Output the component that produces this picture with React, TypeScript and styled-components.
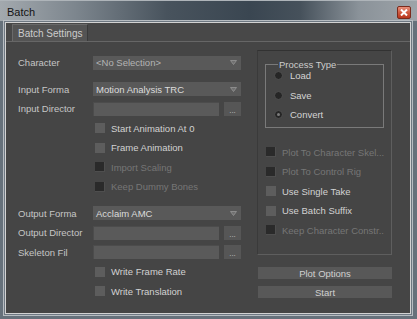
import styled, { createGlobalStyle } from "styled-components";

const GlobalStyle = createGlobalStyle`
  html, body {
    margin: 0;
    padding: 0;
    background: #65707a;
  }
  body {
    font-family: "Liberation Sans", Arial, sans-serif;
    font-size: 9.5px;
  }
`;

const Window = styled.div`
  width: 417px;
  height: 319px;
  display: flex;
  flex-direction: column;
  background: #66717b;
  overflow: hidden;
`;

const TitleBar = styled.div`
  height: 21px;
  flex: none;
  display: flex;
  align-items: center;
  justify-content: space-between;
  padding: 0 6px 0 7px;
  box-sizing: border-box;
  background: linear-gradient(
    90deg,
    #a3a9ae 0%,
    #7d868e 18%,
    #48535d 40%,
    #3a4651 60%,
    #46515b 72%,
    #8a9299 86%,
    #9ea4a9 100%
  );
  border-top: 1px solid #aeb4b9;
`;

const Title = styled.span`
  font-size: 11px;
  color: #141414;
  margin-top: 1px;
`;

const CloseButton = styled.div`
  width: 14px;
  height: 13px;
  margin-top: 2px;
  box-sizing: border-box;
  border: 1px solid #7a2a1c;
  border-radius: 2px;
  background: linear-gradient(180deg, #e8907c 0%, #cf5a40 50%, #b8361c 100%);
  display: flex;
  align-items: center;
  justify-content: center;
`;

const Frame = styled.div`
  flex: 1;
  margin: 1px 6px 5px 5px;
  border: 1px solid #d2d2d2;
  box-shadow: 0 0 0 1px #6e7882, 0 0 0 2px #b7bcc1;
  background: #454545;
  display: flex;
  flex-direction: column;
`;

const TabStrip = styled.div`
  height: 18px;
  flex: none;
  display: flex;
  align-items: flex-end;
  padding-left: 6px;
  background: #484848;
  border-bottom: 1px solid #666666;
`;

const Tab = styled.div`
  height: 16px;
  padding: 0 5px;
  display: flex;
  align-items: center;
  background: #545454;
  border-top: 1px solid #6a6a6a;
  border-left: 1px solid #6a6a6a;
  border-right: 1px solid #3a3a3a;
  color: #cccccc;
  font-size: 10px;
`;

const Body = styled.div`
  flex: 1;
  display: flex;
  gap: 16px;
  padding: 0 17px 0 12px;
`;

const LeftColumn = styled.div`
  width: 223px;
  padding-top: 11px;
  display: flex;
  flex-direction: column;
`;

const RightColumn = styled.div`
  width: 135px;
  padding-top: 8px;
  display: flex;
  flex-direction: column;
`;

const Row = styled.div<{ $gap?: number }>`
  height: 19.5px;
  flex: none;
  display: flex;
  align-items: center;
  margin-top: ${(p) => p.$gap ?? 0}px;
`;

const Label = styled.div`
  width: 75px;
  flex: none;
  overflow: hidden;
  white-space: nowrap;
  color: #c6c6c6;
`;

const Combo = styled.div<{ $dim?: boolean }>`
  width: 148px;
  height: 14px;
  box-sizing: border-box;
  display: flex;
  align-items: center;
  justify-content: space-between;
  padding: 0 4px 0 3px;
  background: #595959;
  color: ${(p) => (p.$dim ? "#b4b4b4" : "#dcdcdc")};
`;

const TextField = styled.div`
  width: 126px;
  height: 14px;
  box-sizing: border-box;
  background: #5a5a5a;
  border-top: 1px solid #4c4c4c;
  border-left: 1px solid #4c4c4c;
`;

const BrowseButton = styled.div`
  width: 17px;
  height: 14px;
  margin-left: 5px;
  box-sizing: border-box;
  background: #565656;
  color: #c4c4c4;
  font-size: 8px;
  display: flex;
  align-items: flex-end;
  justify-content: center;
  line-height: 10px;
`;

const CheckRow = styled(Row)<{ $indent: number }>`
  padding-left: ${(p) => p.$indent}px;
`;

const Box = styled.span<{ $disabled?: boolean }>`
  width: 10px;
  height: 10px;
  flex: none;
  box-sizing: border-box;
  margin-right: 6px;
  background: ${(p) => (p.$disabled ? "#2a2a2a" : "#5d5d5d")};
  border-right: 1px solid ${(p) => (p.$disabled ? "#4e4e4e" : "#5d5d5d")};
  border-bottom: 1px solid ${(p) => (p.$disabled ? "#4e4e4e" : "#5d5d5d")};
`;

const CheckText = styled.span<{ $disabled?: boolean }>`
  color: ${(p) => (p.$disabled ? "#767676" : "#d2d2d2")};
  white-space: nowrap;
`;

const Panel = styled.div`
  height: 205px;
  box-sizing: border-box;
  border: 1px solid #5e5e5e;
  border-top-color: #323232;
  border-left-color: #3a3a3a;
  display: flex;
  flex-direction: column;
  padding: 0 7px;
`;

const Group = styled.fieldset`
  margin: 8px 0 0 0;
  padding: 0 0 2px 8px;
  border: 1px solid #7a7a7a;
  min-width: 0;
`;

const Legend = styled.legend`
  margin-left: 4px;
  margin-bottom: -4px;
  padding: 0 1px;
  color: #cccccc;
  font-size: 9.5px;
  line-height: 11px;
`;

const Radio = styled.span<{ $checked?: boolean }>`
  width: 9px;
  height: 9px;
  flex: none;
  box-sizing: border-box;
  border-radius: 50%;
  margin-right: 7px;
  background: #262626;
  border: 1px solid #505050;
  display: flex;
  align-items: center;
  justify-content: center;

  &::after {
    content: "";
    width: 3px;
    height: 3px;
    border-radius: 50%;
    background: ${(p) => (p.$checked ? "#7c7c7c" : "transparent")};
  }
`;

const RadioText = styled.span`
  color: #d4d4d4;
`;

const CheckList = styled.div`
  margin-top: 15px;
  padding-left: 1px;
  display: flex;
  flex-direction: column;
`;

const ActionButton = styled.div<{ $gap: number }>`
  height: 12px;
  margin-top: ${(p) => p.$gap}px;
  background: #585858;
  color: #d0d0d0;
  display: flex;
  align-items: center;
  justify-content: center;
  margin-left: 1px;
`;

const Arrow = () => (
  <svg width="7" height="5" viewBox="0 0 7 5">
    <path d="M0.5 0.5 L6.5 0.5 L3.5 4.5 Z" fill="#707070" stroke="#8c8c8c" strokeWidth="1" />
  </svg>
);

const CloseGlyph = () => (
  <svg width="8" height="7" viewBox="0 0 8 7">
    <path d="M1 0.5 L7 6.5 M7 0.5 L1 6.5" stroke="#ffffff" strokeWidth="2" />
  </svg>
);

type Check = { label: string; disabled?: boolean };

const leftChecksTop: Check[] = [
  { label: "Start Animation At 0" },
  { label: "Frame Animation" },
  { label: "Import Scaling", disabled: true },
  { label: "Keep Dummy Bones", disabled: true },
];

const leftChecksBottom: Check[] = [
  { label: "Write Frame Rate" },
  { label: "Write Translation" },
];

const rightChecks: Check[] = [
  { label: "Plot To Character Skel...", disabled: true },
  { label: "Plot To Control Rig", disabled: true },
  { label: "Use Single Take" },
  { label: "Use Batch Suffix" },
  { label: "Keep Character Constr..", disabled: true },
];

const App = () => {
  return (
    <Window>
      <GlobalStyle />
      <TitleBar>
        <Title>Batch</Title>
        <CloseButton>
          <CloseGlyph />
        </CloseButton>
      </TitleBar>
      <Frame>
        <TabStrip>
          <Tab>Batch Settings</Tab>
        </TabStrip>
        <Body>
          <LeftColumn>
            <Row>
              <Label>Character</Label>
              <Combo $dim>
                <span>&lt;No Selection&gt;</span>
                <Arrow />
              </Combo>
            </Row>
            <Row $gap={7}>
              <Label>Input Forma</Label>
              <Combo>
                <span>Motion Analysis TRC</span>
                <Arrow />
              </Combo>
            </Row>
            <Row>
              <Label>Input Director</Label>
              <TextField />
              <BrowseButton>...</BrowseButton>
            </Row>
            {leftChecksTop.map((c) => (
              <CheckRow key={c.label} $indent={77}>
                <Box $disabled={c.disabled} />
                <CheckText $disabled={c.disabled}>{c.label}</CheckText>
              </CheckRow>
            ))}
            <Row $gap={7}>
              <Label>Output Forma</Label>
              <Combo>
                <span>Acclaim AMC</span>
                <Arrow />
              </Combo>
            </Row>
            <Row>
              <Label>Output Director</Label>
              <TextField />
              <BrowseButton>...</BrowseButton>
            </Row>
            <Row>
              <Label>Skeleton Fil</Label>
              <TextField />
              <BrowseButton>...</BrowseButton>
            </Row>
            {leftChecksBottom.map((c) => (
              <CheckRow key={c.label} $indent={77}>
                <Box $disabled={c.disabled} />
                <CheckText $disabled={c.disabled}>{c.label}</CheckText>
              </CheckRow>
            ))}
          </LeftColumn>
          <RightColumn>
            <Panel>
              <Group>
                <Legend>Process Type</Legend>
                {["Load", "Save", "Convert"].map((r) => (
                  <Row key={r}>
                    <Radio $checked={r === "Convert"} />
                    <RadioText>{r}</RadioText>
                  </Row>
                ))}
              </Group>
              <CheckList>
                {rightChecks.map((c) => (
                  <CheckRow key={c.label} $indent={0}>
                    <Box $disabled={c.disabled} />
                    <CheckText $disabled={c.disabled}>{c.label}</CheckText>
                  </CheckRow>
                ))}
              </CheckList>
            </Panel>
            <ActionButton $gap={12}>Plot Options</ActionButton>
            <ActionButton $gap={7}>Start</ActionButton>
          </RightColumn>
        </Body>
      </Frame>
    </Window>
  );
};

export default App;
